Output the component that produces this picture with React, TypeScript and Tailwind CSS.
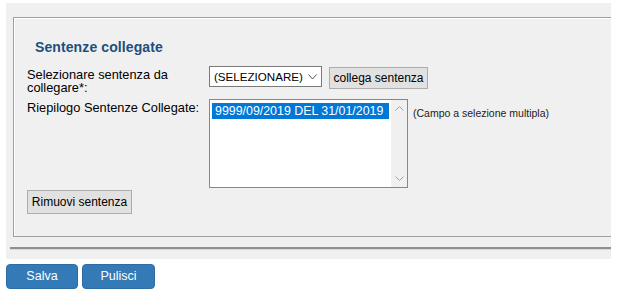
import React from 'react'

export default function App() {
  return (
    <div className="w-[618px] h-[293px] bg-white overflow-hidden font-['Liberation_Sans',Arial,sans-serif] text-[13px] text-black">

      {/* Pannello grigio */}
      <div className="ml-[6px] mt-[3px] w-[605px] h-[256px] bg-[#f0f0f0] pt-[14px] pl-[7px] overflow-hidden">

        {/* Fieldset sentenze */}
        <div className="w-[620px] h-[220px] border border-r-0 border-[#a0a0a0] shadow-[inset_1px_1px_0_#ffffff] pl-[13px] pt-[21px]">
          <div className="ml-[8px] text-[14px] leading-[16px] font-bold text-[#1d4f7c] tracking-[0.1px]">
            Sentenze collegate
          </div>

          {/* Riga selezione */}
          <div className="flex items-start mt-[11px]">
            <div className="w-[182px] mt-[2px] text-[12.8px] leading-[13px] pr-[10px]">
              Selezionare sentenza da collegare*:
            </div>
            <div className="w-[113px] h-[21px] bg-white border border-[#7a7a7a] flex items-center justify-between pl-[4px] pr-[4px] whitespace-nowrap">
              <span className="text-[11.6px] leading-[15px]">(SELEZIONARE)</span>
              <svg width="9" height="6" viewBox="0 0 9 6" fill="none" stroke="#555" strokeWidth="1">
                <path d="M0.5 0.5 L4.5 5 L8.5 0.5" />
              </svg>
            </div>
            <button className="ml-[7px] mt-[1px] w-[99px] h-[22px] bg-[#e1e1e1] border border-[#adadad] text-[12px] leading-[15px] text-black whitespace-nowrap">
              collega sentenza
            </button>
          </div>

          {/* Riga riepilogo */}
          <div className="flex items-start mt-[5px]">
            <div className="w-[182px] text-[12.8px] leading-[13px] mt-[2px]">
              Riepilogo Sentenze Collegate:
            </div>
            <div className="w-[199px] h-[89px] bg-white border border-[#828790] flex">
              <div className="flex-1 pl-[2px] pt-[3px]">
                <div className="w-[177px] h-[16px] bg-[#0078d7] text-white text-[12.4px] leading-[16px] pl-[3px] whitespace-nowrap">
                  9999/09/2019 DEL 31/01/2019
                </div>
              </div>
              <div className="w-[16px] bg-[#f0f0f0] flex flex-col items-center justify-between py-[6px]">
                <svg width="9" height="5" viewBox="0 0 9 5" fill="none" stroke="#a3a3a3" strokeWidth="1">
                  <path d="M0.5 4.5 L4.5 0.5 L8.5 4.5" />
                </svg>
                <svg width="9" height="5" viewBox="0 0 9 5" fill="none" stroke="#a3a3a3" strokeWidth="1">
                  <path d="M0.5 0.5 L4.5 4.5 L8.5 0.5" />
                </svg>
              </div>
            </div>
            <div className="ml-[5px] mt-[8px] text-[10.5px] leading-[12px] text-[#222] whitespace-nowrap">
              (Campo a selezione multipla)
            </div>
          </div>

          {/* Rimuovi */}
          <button className="mt-[2px] w-[105px] h-[24px] bg-[#e1e1e1] border border-[#adadad] text-[12px] leading-[15px] text-black whitespace-nowrap">
            Rimuovi sentenza
          </button>
        </div>

        {/* Separatore */}
        <div className="mt-[10px] ml-[-3px] h-[2px] w-[620px] bg-[#8f8f8f] border-b border-[#d8d8d8] box-content"></div>
      </div>

      {/* Pulsanti */}
      <div className="flex gap-[4px] ml-[6px] mt-[5px]">
        <button className="w-[72px] h-[25px] bg-[#337ab7] border border-[#2e6da4] rounded-[4px] text-white text-[12.5px]">
          Salva
        </button>
        <button className="w-[73px] h-[25px] bg-[#337ab7] border border-[#2e6da4] rounded-[4px] text-white text-[12.5px]">
          Pulisci
        </button>
      </div>
    </div>
  )
}
